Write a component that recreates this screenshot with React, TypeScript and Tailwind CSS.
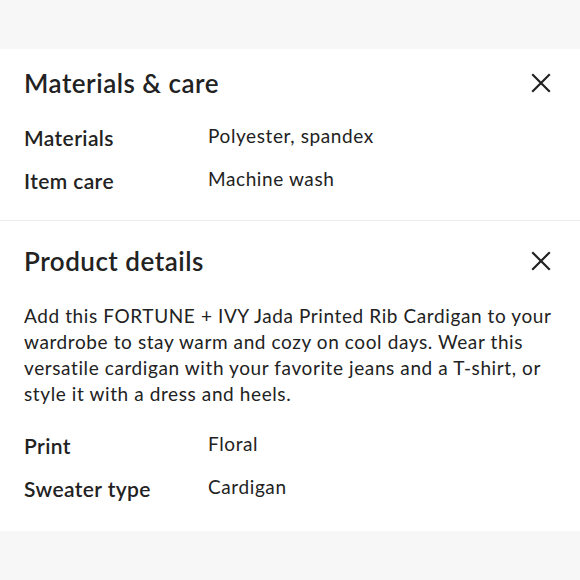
import React from "react";

function CloseIcon() {
  return (
    <svg width="22" height="22" viewBox="0 0 22 22" fill="none" stroke="#222" strokeWidth="2.2" strokeLinecap="square">
      <path d="M3 3L19 19M19 3L3 19" />
    </svg>
  );
}

function Row({ label, value }: { label: string; value: string }) {
  return (
    <div className="flex items-start">
      <div className="w-[184px] text-[21px] font-semibold text-[#222] leading-[28px] tracking-[0.4px]">{label}</div>
      <div className="text-[19px] text-[#222] leading-[24px] tracking-[0.6px]">{value}</div>
    </div>
  );
}

function Header({ title }: { title: string }) {
  return (
    <div className="flex items-center justify-between">
      <h2 className="text-[26px] font-semibold text-[#222] leading-[30px] tracking-[0.5px]">{title}</h2>
      <button className="mr-[4px]"><CloseIcon /></button>
    </div>
  );
}

export default function App() {
  return (
    <div className="w-[580px] h-[580px] bg-[#f7f7f7] pt-[49px] font-['Lato',sans-serif] overflow-hidden">
      <div className="bg-white">
        <section className="px-6 pt-[19px] pb-[25px] border-b border-[#ececec]">
          <Header title="Materials & care" />
          <div className="mt-[26px] flex flex-col gap-[15px]">
            <Row label="Materials" value="Polyester, spandex" />
            <Row label="Item care" value="Machine wash" />
          </div>
        </section>
        <section className="px-6 pt-[25px] pb-[28px]">
          <Header title="Product details" />
          <p className="mt-[27px] text-[19px] leading-[26px] text-[#222] tracking-[0.6px]">
            Add this FORTUNE + IVY Jada Printed Rib Cardigan to your wardrobe to stay warm and cozy on cool days. Wear this versatile cardigan with your favorite jeans and a T-shirt, or style it with a dress and heels.
          </p>
          <div className="mt-[25px] flex flex-col gap-[15px]">
            <Row label="Print" value="Floral" />
            <Row label="Sweater type" value="Cardigan" />
          </div>
        </section>
      </div>
    </div>
  );
}
